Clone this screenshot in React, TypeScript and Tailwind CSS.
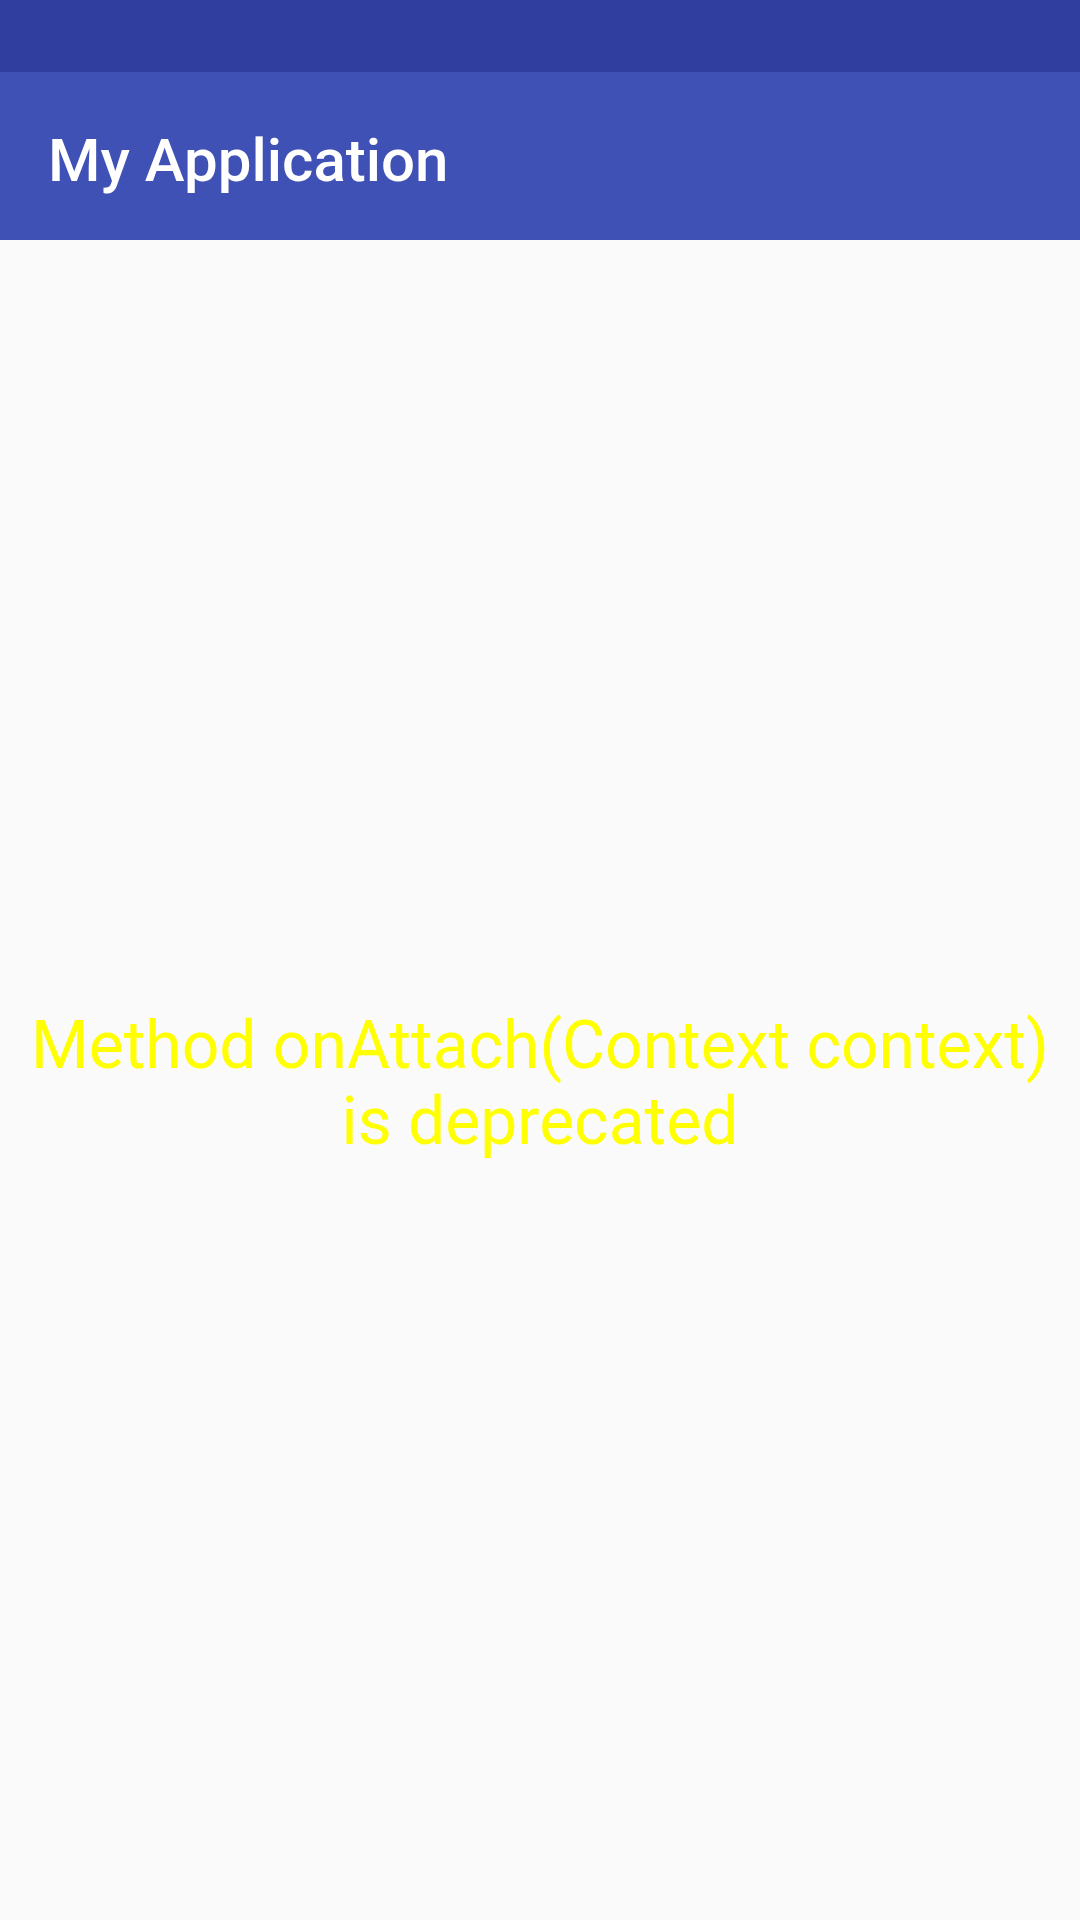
export default function App() {
  return (
    <div className="flex h-[1920px] w-[1080px] flex-col bg-[#fafafa] font-['Roboto',sans-serif]">
      <div className="h-[72px] shrink-0 bg-[#303f9f]" />
      <header className="flex h-[168px] shrink-0 items-center bg-[#3f51b5] px-[48px] pt-[10px]">
        <h1 className="text-[60px] font-medium leading-none text-white">My Application</h1>
      </header>
      <main className="flex flex-1 items-center justify-center pt-[7px]">
        <p className="text-center text-[66px] leading-[76px] text-[#ffff00]">
          Method onAttach(Context context)
          <br />
          is deprecated
        </p>
      </main>
    </div>
  );
}
